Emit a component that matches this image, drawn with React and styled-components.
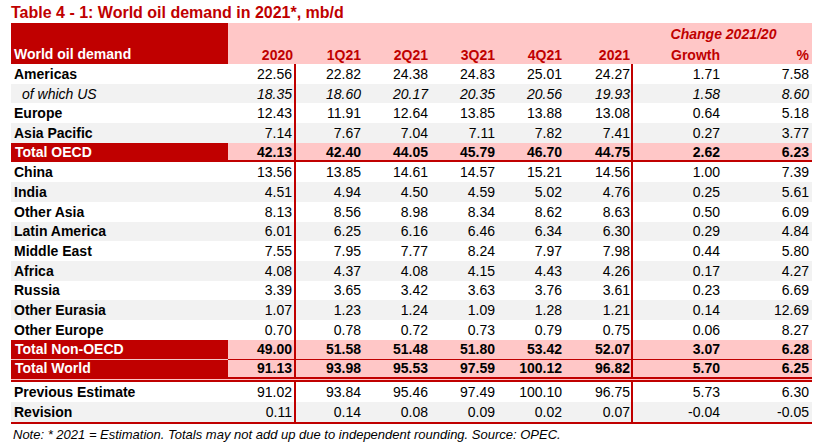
import React from "react";
import styled, { createGlobalStyle, css } from "styled-components";

const RED = "#c00000";
const PINK = "#ffc7c7";
const GRAY = "#f2f2f2";
const COLS = "217px 68px 67px 67px 67px 67px 69px 89px 90px";

const Global = createGlobalStyle`
  html, body { margin: 0; padding: 0; background: #fff; }
  body { font-family: "Liberation Sans", Arial, sans-serif; color: #000; }
  *, *::before, *::after { box-sizing: border-box; }
`;

const Page = styled.div`
  width: 823px;
  height: 448px;
  padding: 3px 0 0 11px;
  overflow: hidden;
`;

const Title = styled.h1`
  margin: 0;
  height: 20px;
  font-size: 16px;
  line-height: 20px;
  font-weight: bold;
  color: ${RED};
  white-space: nowrap;
`;

const Table = styled.div`
  width: 801px;
  display: flex;
  flex-direction: column;
`;

const Header = styled.div`
  display: grid;
  grid-template-columns: ${COLS};
  grid-template-rows: 20px 21px;
  background: ${PINK};
`;

const HeaderLabel = styled.div`
  grid-row: 1 / span 2;
  background: ${RED};
  color: #fff;
  font-weight: bold;
  font-size: 14px;
  display: flex;
  align-items: flex-end;
  padding: 0 0 2px 3px;
`;

const HeaderCell = styled.div`
  grid-row: 2;
  color: ${RED};
  font-weight: bold;
  font-size: 14px;
  text-align: right;
  padding: 4px ${(p) => p.$pr || 3}px 0 0;
  white-space: nowrap;
`;

const ChangeHead = styled.div`
  grid-row: 1;
  grid-column: 8 / span 2;
  color: ${RED};
  font-weight: bold;
  font-style: italic;
  font-size: 14px;
  text-align: center;
  padding-top: 3px;
  padding-left: 2px;
`;

const rowVariants = {
  normal: css`height: 19.7px;`,
  oecd: css`height: 19.7px; border-bottom: 2px solid ${RED};`,
  nonoecd: css`height: 20px; border-bottom: 1px solid ${RED};`,
  world: css`height: 22.5px; border-bottom: 5px double ${RED};`,
  last: css`height: 22px; border-bottom: 2px solid ${RED};`,
};

const Row = styled.div`
  display: grid;
  grid-template-columns: ${COLS};
  background: ${(p) => (p.$total ? PINK : p.$shade ? GRAY : "#fff")};
  font-size: 14px;
  ${(p) => rowVariants[p.$variant || "normal"]}
`;

const Label = styled.div`
  display: flex;
  align-items: center;
  padding-left: ${(p) => (p.$indent ? 11 : p.$total ? 4 : 3)}px;
  font-weight: ${(p) => (p.$italic ? "normal" : "bold")};
  font-style: ${(p) => (p.$italic ? "italic" : "normal")};
  white-space: nowrap;
  ${(p) =>
    p.$total &&
    css`
      background: ${RED};
      color: #fff;
    `}
  ${(p) =>
    p.$split &&
    css`
      box-shadow: 0 1px 0 #f3caca;
    `}
`;

const Cell = styled.div`
  display: flex;
  align-items: center;
  justify-content: flex-end;
  padding-right: ${(p) => p.$pr}px;
  font-weight: ${(p) => (p.$bold ? "bold" : "normal")};
  font-style: ${(p) => (p.$italic ? "italic" : "normal")};
  ${(p) => p.$line && css`border-right: 2px solid ${RED};`}
  white-space: nowrap;
`;

const Note = styled.p`
  margin: 3px 0 0 2px;
  font-size: 13px;
  font-style: italic;
  white-space: nowrap;
`;

const rows = [
  { label: "Americas", v: ["22.56", "22.82", "24.38", "24.83", "25.01", "24.27", "1.71", "7.58"] },
  { label: "of which US", italic: true, shade: true, v: ["18.35", "18.60", "20.17", "20.35", "20.56", "19.93", "1.58", "8.60"] },
  { label: "Europe", v: ["12.43", "11.91", "12.64", "13.85", "13.88", "13.08", "0.64", "5.18"] },
  { label: "Asia Pacific", shade: true, v: ["7.14", "7.67", "7.04", "7.11", "7.82", "7.41", "0.27", "3.77"] },
  { label: "Total OECD", total: true, variant: "oecd", v: ["42.13", "42.40", "44.05", "45.79", "46.70", "44.75", "2.62", "6.23"] },
  { label: "China", v: ["13.56", "13.85", "14.61", "14.57", "15.21", "14.56", "1.00", "7.39"] },
  { label: "India", shade: true, v: ["4.51", "4.94", "4.50", "4.59", "5.02", "4.76", "0.25", "5.61"] },
  { label: "Other Asia", v: ["8.13", "8.56", "8.98", "8.34", "8.62", "8.63", "0.50", "6.09"] },
  { label: "Latin America", shade: true, v: ["6.01", "6.25", "6.16", "6.46", "6.34", "6.30", "0.29", "4.84"] },
  { label: "Middle East", v: ["7.55", "7.95", "7.77", "8.24", "7.97", "7.98", "0.44", "5.80"] },
  { label: "Africa", shade: true, v: ["4.08", "4.37", "4.08", "4.15", "4.43", "4.26", "0.17", "4.27"] },
  { label: "Russia", v: ["3.39", "3.65", "3.42", "3.63", "3.76", "3.61", "0.23", "6.69"] },
  { label: "Other Eurasia", shade: true, v: ["1.07", "1.23", "1.24", "1.09", "1.28", "1.21", "0.14", "12.69"] },
  { label: "Other Europe", v: ["0.70", "0.78", "0.72", "0.73", "0.79", "0.75", "0.06", "8.27"] },
  { label: "Total Non-OECD", total: true, variant: "nonoecd", split: true, v: ["49.00", "51.58", "51.48", "51.80", "53.42", "52.07", "3.07", "6.28"] },
  { label: "Total World", total: true, variant: "world", v: ["91.13", "93.98", "95.53", "97.59", "100.12", "96.82", "5.70", "6.25"] },
  { label: "Previous Estimate", v: ["91.02", "93.84", "95.46", "97.49", "100.10", "96.75", "5.73", "6.30"] },
  { label: "Revision", shade: true, variant: "last", v: ["0.11", "0.14", "0.08", "0.09", "0.02", "0.07", "-0.04", "-0.05"] },
];

const heads = ["2020", "1Q21", "2Q21", "3Q21", "4Q21", "2021", "Growth", "%"];
const pads = [2, 2, 2, 2, 2, 1, 2, 3];
const headPads = [3, 2, 2, 2, 2, 3, 2, 3];

export default function App() {
  return (
    <>
      <Global />
      <Page>
        <Title>Table 4 - 1: World oil demand in 2021*, mb/d</Title>
        <Table>
          <Header>
            <HeaderLabel>World oil demand</HeaderLabel>
            <ChangeHead>Change 2021/20</ChangeHead>
            {heads.map((h, i) => (
              <HeaderCell key={h} $pr={headPads[i]} style={{ gridColumn: i + 2 }}>
                {h}
              </HeaderCell>
            ))}
          </Header>
          {rows.map((r) => (
            <Row key={r.label} $total={r.total} $shade={r.shade} $variant={r.variant}>
              <Label $total={r.total} $italic={r.italic} $indent={r.italic} $split={r.split}>
                {r.label}
              </Label>
              {r.v.map((val, i) => (
                <Cell
                  key={i}
                  $pr={pads[i]}
                  $bold={r.total}
                  $italic={r.italic}
                  $line={i === 0 || i === 5}
                >
                  {val}
                </Cell>
              ))}
            </Row>
          ))}
        </Table>
        <Note>
          Note: * 2021 = Estimation. Totals may not add up due to independent rounding. Source: OPEC.
        </Note>
      </Page>
    </>
  );
}
